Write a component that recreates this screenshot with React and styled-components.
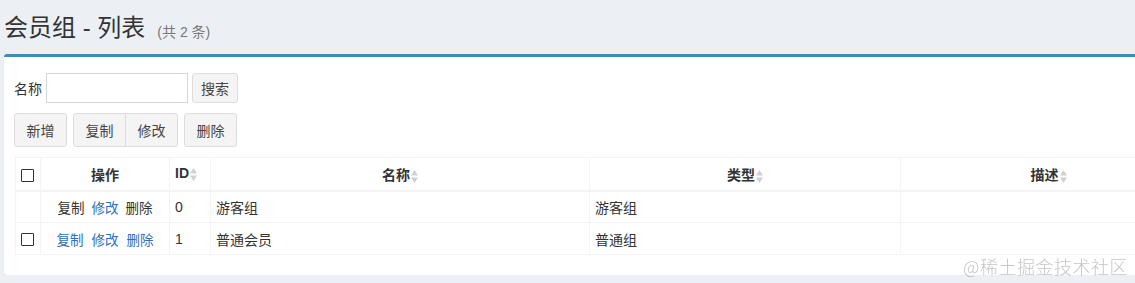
import React from "react";
import styled, { createGlobalStyle } from "styled-components";

const Global = createGlobalStyle`
  html, body { margin: 0; padding: 0; background: #ecf0f5; overflow: hidden; }
  body { font-family: "Liberation Sans", "Noto Sans CJK SC", sans-serif; color: #333; font-size: 14px; }
`;

const Page = styled.div`
  width: 1260px;
  padding: 0 0 0 4px;
`;

const Header = styled.div`
  height: 54px;
  display: flex;
  align-items: center;
  gap: 12px;
`;

const Title = styled.h1`
  margin: 0;
  font-size: 24px;
  font-weight: 400;
  color: #333;
  line-height: 1;
  position: relative;
  top: 1px;
`;

const Sub = styled.small`
  font-size: 14px;
  color: #777;
  position: relative;
  top: 4px;
`;

const Box = styled.div`
  background: #fff;
  border-top: 3px solid #3c8dbc;
  border-radius: 3px;
  box-shadow: 0 1px 1px rgba(0, 0, 0, 0.1);
  padding: 16px 10px 20px 10px;
  display: flex;
  flex-direction: column;
`;

const SearchRow = styled.div`
  display: flex;
  align-items: center;
  gap: 4px;
  height: 30px;
  margin-bottom: 10px;
`;

const Label = styled.span`
  font-size: 14px;
  color: #333;
`;

const Input = styled.input`
  box-sizing: border-box;
  width: 142px;
  height: 30px;
  border: 1px solid #d2d6de;
  padding: 4px 8px;
  font-size: 13px;
  outline: none;
`;

const Btn = styled.button`
  box-sizing: border-box;
  height: ${(p) => (p.$small ? "30px" : "34px")};
  padding: 0 ${(p) => (p.$small ? "8px" : "11.5px")};
  background: #f4f4f4;
  border: 1px solid #ddd;
  border-radius: ${(p) => (p.$left ? "3px 0 0 3px" : p.$right ? "0 3px 3px 0" : "3px")};
  ${(p) => (p.$right ? "margin-left: -1px;" : "")}
  font-family: inherit;
  font-size: 14px;
  color: #444;
  cursor: pointer;
`;

const Toolbar = styled.div`
  display: flex;
  gap: 6px;
  margin-bottom: 10px;
`;

const Group = styled.div`
  display: flex;
`;

const Table = styled.table`
  border-collapse: collapse;
  table-layout: fixed;
  width: 1181px;
  margin-left: 1px;
  font-size: 14px;
`;

const Th = styled.th`
  height: 33px;
  box-sizing: border-box;
  border: 1px solid #f4f4f4;
  border-bottom: 2px solid #f4f4f4;
  font-weight: 700;
  color: #333;
  text-align: ${(p) => (p.$left ? "left" : "center")};
  padding: 0 ${(p) => (p.$left ? "5px" : "8px")};
  white-space: nowrap;
`;

const Td = styled.td`
  height: 32px;
  box-sizing: border-box;
  border: 1px solid #f4f4f4;
  padding: 0 5px;
  color: #333;
  text-align: left;
  white-space: nowrap;
`;

const Check = styled.span`
  display: inline-block;
  width: 11px;
  height: 11px;
  border: 1px solid #333;
  border-radius: 1px;
  vertical-align: middle;
`;

const Actions = styled.div`
  display: flex;
  justify-content: center;
  gap: ${(p) => (p.$plain ? "7px" : "8px")};
  font-size: 13.5px;
`;

const Link = styled.a`
  color: ${(p) => (p.$plain ? "#333" : "#2f6fba")};
  text-decoration: none;
`;

const SortWrap = styled.span`
  display: inline-flex;
  flex-direction: column;
  vertical-align: middle;
  margin-left: 1px;
`;

const Watermark = styled.div`
  position: fixed;
  right: 7px;
  top: 253px;
  font-family: "Noto Sans CJK SC", sans-serif;
  font-size: 18px;
  font-weight: 300;
  color: rgba(150, 150, 150, 0.55);
  letter-spacing: 0.5px;
`;

const Sort = () => (
  <SortWrap>
    <svg width="7" height="15" viewBox="0 0 7 15">
      <path d="M3.5 1 L7 6.5 L0 6.5 Z" fill="#d0d0d0" />
      <path d="M3.5 14 L7 8.5 L0 8.5 Z" fill="#d0d0d0" />
    </svg>
  </SortWrap>
);

const cols = [25, 129, 41, 379, 311, 296];

const rows = [
  { id: 0, name: "游客组", type: "游客组", check: false, plain: true },
  { id: 1, name: "普通会员", type: "普通组", check: true, plain: false },
];

export default function App() {
  return (
    <>
      <Global />
      <Page>
        <Header>
          <Title>会员组 - 列表</Title>
          <Sub>(共 2 条)</Sub>
        </Header>
        <Box>
          <SearchRow>
            <Label>名称</Label>
            <Input />
            <Btn $small>搜索</Btn>
          </SearchRow>
          <Toolbar>
            <Btn>新增</Btn>
            <Group>
              <Btn $left>复制</Btn>
              <Btn $right>修改</Btn>
            </Group>
            <Btn>删除</Btn>
          </Toolbar>
          <Table>
            <colgroup>
              {cols.map((w, i) => (
                <col key={i} style={{ width: w }} />
              ))}
            </colgroup>
            <thead>
              <tr>
                <Th $left><Check /></Th>
                <Th>操作</Th>
                <Th $left>ID<Sort /></Th>
                <Th>名称<Sort /></Th>
                <Th>类型<Sort /></Th>
                <Th>描述<Sort /></Th>
              </tr>
            </thead>
            <tbody>
              {rows.map((r) => (
                <tr key={r.id}>
                  <Td>{r.check ? <Check /> : null}</Td>
                  <Td>
                    <Actions $plain={r.plain}>
                      <Link $plain={r.plain}>复制</Link>
                      <Link>修改</Link>
                      <Link $plain={r.plain}>删除</Link>
                    </Actions>
                  </Td>
                  <Td>{r.id}</Td>
                  <Td>{r.name}</Td>
                  <Td>{r.type}</Td>
                  <Td></Td>
                </tr>
              ))}
            </tbody>
          </Table>
        </Box>
      </Page>
      <Watermark>@稀土掘金技术社区</Watermark>
    </>
  );
}
